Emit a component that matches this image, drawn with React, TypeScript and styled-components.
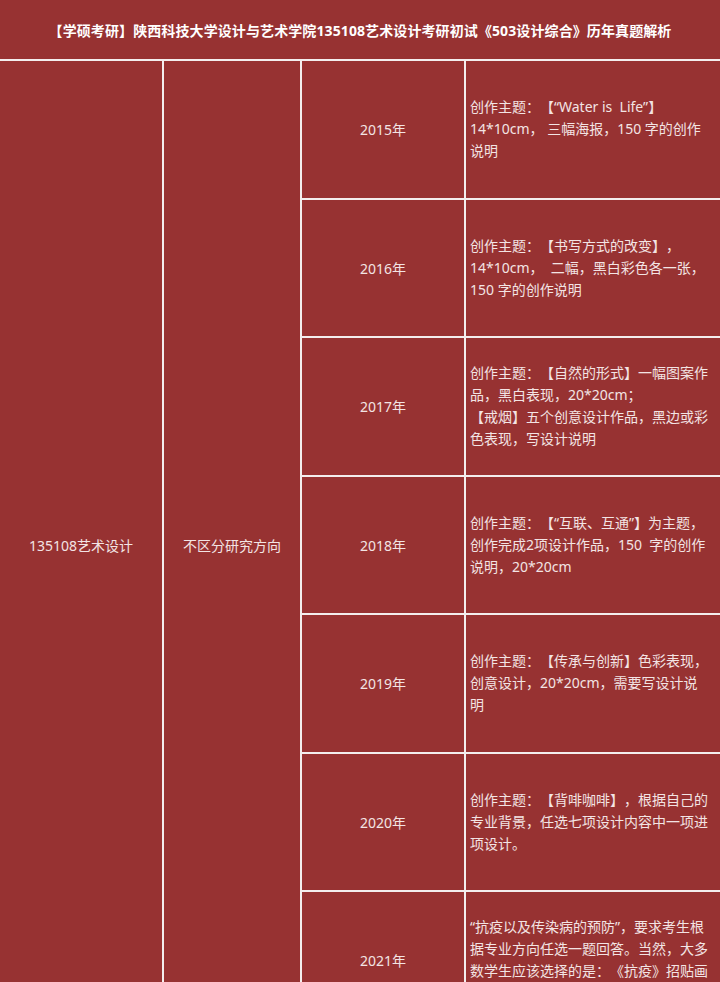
import styled, { createGlobalStyle } from "styled-components";

const GlobalStyle = createGlobalStyle`
  html, body {
    margin: 0;
    padding: 0;
    background: #973232;
  }
  body {
    font-family: "Noto Sans", "Noto Sans CJK SC", sans-serif;
    text-spacing-trim: space-all;
  }
`;

type Row = { year: string; lines: string[] };

const rows: Row[] = [
  {
    year: "2015年",
    lines: ["创作主题：【“Water is  Life”】", "14*10cm， 三幅海报，150 字的创作", "说明"],
  },
  {
    year: "2016年",
    lines: ["创作主题：【书写方式的改变】，", "14*10cm，  二幅，黑白彩色各一张，", "150 字的创作说明"],
  },
  {
    year: "2017年",
    lines: [
      "创作主题：【自然的形式】一幅图案作",
      "品，黑白表现，20*20cm；",
      "【戒烟】五个创意设计作品，黑边或彩",
      "色表现，写设计说明",
    ],
  },
  {
    year: "2018年",
    lines: ["创作主题：【“互联、互通”】为主题，", "创作完成2项设计作品，150  字的创作", "说明，20*20cm"],
  },
  {
    year: "2019年",
    lines: ["创作主题：【传承与创新】色彩表现，", "创意设计，20*20cm，需要写设计说", "明"],
  },
  {
    year: "2020年",
    lines: ["创作主题：【背啡咖啡】，根据自己的", "专业背景，任选七项设计内容中一项进", "项设计。"],
  },
  {
    year: "2021年",
    lines: [
      "“抗疫以及传染病的预防”，要求考生根",
      "据专业方向任选一题回答。当然，大多",
      "数学生应该选择的是：《抗疫》招贴画",
      "设计，并附设计说明。",
    ],
  },
];

export default function App() {
  return (
    <>
      <GlobalStyle />
      <Table>
        <Header>
          【学硕考研】陕西科技大学设计与艺术学院135108艺术设计考研初试《503设计综合》历年真题解析
        </Header>
        <SpanCell $col={1}>135108艺术设计</SpanCell>
        <SpanCell $col={2}>不区分研究方向</SpanCell>
        {rows.map((r) => (
          <YearRow key={r.year}>
            <YearCell>{r.year}</YearCell>
            <DetailCell>
              {r.lines.map((l) => (
                <Line key={l}>{l}</Line>
              ))}
            </DetailCell>
          </YearRow>
        ))}
      </Table>
    </>
  );
}

const Table = styled.div`
  display: grid;
  grid-template-columns: 162px 136px 162px 1fr;
  grid-template-rows: 59px repeat(6, 136.5px) 136px;
  gap: 2px;
  background: #f4eeee;
  width: 720px;
  overflow: hidden;
`;

const Cell = styled.div`
  background: #973232;
  color: #f3e4e4;
  font-size: 14px;
  display: flex;
  align-items: center;
  justify-content: center;
`;

const Header = styled(Cell)`
  grid-column: 1 / -1;
  color: #ffffff;
  font-weight: 700;
  font-size: 14px;
  letter-spacing: 0.1px;
  padding-top: 1px;
`;

const SpanCell = styled(Cell)<{ $col: number }>`
  grid-column: ${(p) => p.$col};
  grid-row: 2 / span 7;
`;

const YearRow = styled.div`
  grid-column: 3 / span 2;
  display: grid;
  grid-template-columns: 162px 1fr;
  gap: 2px;
`;

const YearCell = styled(Cell)``;

const DetailCell = styled(Cell)`
  flex-direction: column;
  align-items: flex-start;
  padding-left: 4px;
  line-height: 22px;
  font-size: 14px;
`;

const Line = styled.div`
  white-space: pre;
`;
